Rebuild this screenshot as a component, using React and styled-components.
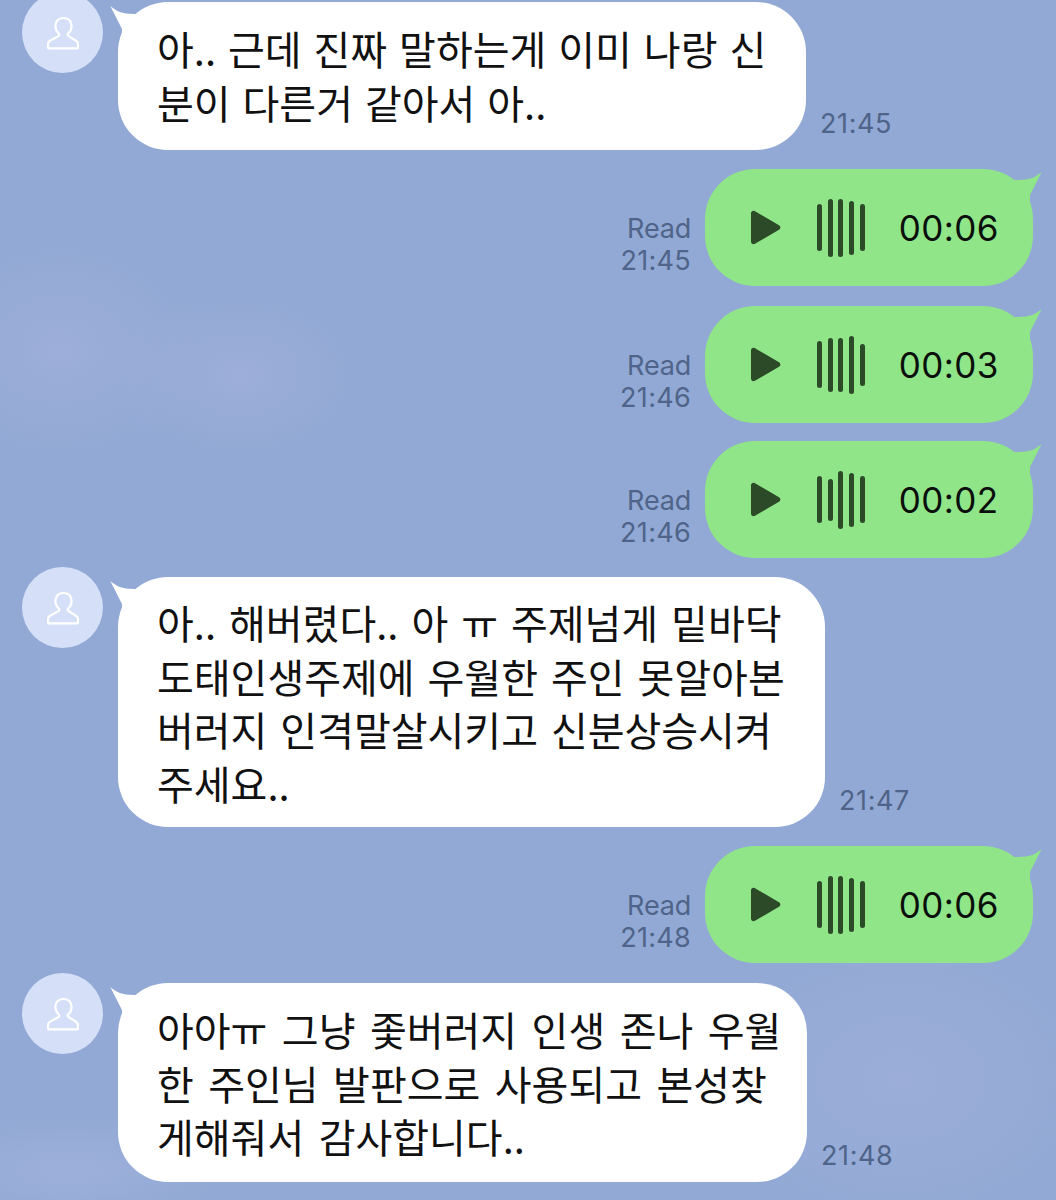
import React from 'react'
import styled, { createGlobalStyle } from 'styled-components'

const Global = createGlobalStyle`
  html, body {
    margin: 0;
    padding: 0;
    background: #92a9d5;
  }
`

const Page = styled.div`
  width: 1056px;
  height: 1200px;
  overflow: hidden;
  font-family: "Noto Sans CJK KR", "Liberation Sans", sans-serif;
  background-color: #92a9d5;
  background-image:
    radial-gradient(ellipse 150px 120px at 60px 350px, rgba(157, 174, 217, 0.9), transparent),
    radial-gradient(ellipse 130px 90px at 240px 375px, rgba(157, 174, 217, 0.9), transparent),
    radial-gradient(ellipse 170px 60px at 70px 1170px, rgba(160, 178, 220, 0.7), transparent),
    radial-gradient(ellipse 220px 160px at 900px 1080px, rgba(157, 174, 217, 0.8), transparent);
`

const Feed = styled.div`
  display: flex;
  flex-direction: column;
  margin-top: -8px;
`

const IncomingRow = styled.div`
  display: flex;
  align-items: flex-end;
  padding-left: 22px;
  margin-top: ${p => p.$top}px;
  position: relative;
`

const Avatar = styled.div`
  width: 81px;
  height: 81px;
  border-radius: 50%;
  background: #d5e0f8;
  display: flex;
  align-items: center;
  justify-content: center;
  align-self: flex-start;
  flex-shrink: 0;
`

const TextBubble = styled.div`
  position: relative;
  width: ${p => p.$width}px;
  height: ${p => p.$height}px;
  box-sizing: border-box;
  margin: 10px 0 0 15px;
  padding: ${p => p.$padTop}px 0 0 39px;
  background: #fff;
  border-radius: 50px;
  color: #111;
  font-size: 40px;
  line-height: 53.5px;
  word-spacing: ${p => p.$wordGap}px;
  white-space: nowrap;
`

const Tail = styled.svg`
  position: absolute;
  top: ${p => p.$top}px;
  ${p => (p.$side === 'right' ? 'right: -9px;' : 'left: -8px;')}
`

const Stamp = styled.div`
  font-family: "Inter", "Liberation Sans", sans-serif;
  font-size: 27px;
  color: #4f6488;
  line-height: 32px;
  letter-spacing: 0.3px;
  text-align: right;
`

const IncomingTime = styled(Stamp)`
  margin: 0 0 10px 14px;
  letter-spacing: 0.6px;
`

const OutgoingRow = styled.div`
  display: flex;
  justify-content: flex-end;
  align-items: flex-end;
  gap: 14px;
  padding-right: 23px;
  margin-top: ${p => p.$top}px;
`

const ReadStamp = styled(Stamp)`
  margin-bottom: 9px;
`

const ReadWord = styled.div`
  letter-spacing: -0.2px;
`

const VoiceBubble = styled.div`
  position: relative;
  width: 328px;
  height: 117px;
  box-sizing: border-box;
  padding-left: 45px;
  display: flex;
  align-items: center;
  background: #8fe588;
  border-radius: 50px;
`

const Waves = styled.div`
  display: flex;
  align-items: center;
  gap: 5.7px;
  margin-left: 36px;
`

const WaveBar = styled.span`
  display: block;
  width: 5px;
  height: ${p => p.$h}px;
  border-radius: 3px;
  background: #2c4a28;
`

const Duration = styled.div`
  font-family: "Inter", "Liberation Sans", sans-serif;
  font-size: 35px;
  color: #0b0f0b;
  margin-left: 34px;
  letter-spacing: 0.4px;
`

const PersonIcon = () => (
  <svg width="32" height="34" viewBox="0 0 32 34" fill="none" stroke="#fff" strokeWidth="2.2" strokeLinejoin="round">
    <path d="M16 2c-4.6 0-7.6 3.5-7.6 8 0 3.2 1.5 5.8 3.4 7.5 0.8 0.8 0.6 2-0.4 2.6L3 24.8c-1.4 0.8-2 2-2 3.4v3.4c0 0.5 0.3 0.8 0.8 0.8h28.4c0.5 0 0.8-0.3 0.8-0.8v-3.4c0-1.4-0.6-2.6-2-3.4l-7.4-4.7c-1-0.6-1.2-1.8-0.4-2.6 1.9-1.7 3.4-4.3 3.4-7.5 0-4.5-3-8-7.6-8z" />
  </svg>
)

const PlayIcon = () => (
  <svg width="31" height="35" viewBox="0 0 31 35">
    <path d="M1 3.5C1 1.2 3.1 0.2 5 1.3L29 15.2c1.8 1 1.8 3.6 0 4.6L5 33.7C3.1 34.8 1 33.8 1 31.5z" fill="#2c4a28" />
  </svg>
)

const LeftTail = () => (
  <Tail $side="left" $top={4} width="32" height="30" viewBox="0 0 32 30">
    <path d="M0.300 0C6 5 12 8 24 8H32V30H12V23z" fill="#fff" />
  </Tail>
)

const RightTail = () => (
  <Tail $side="right" $top={3} width="34" height="30" viewBox="0 0 34 30">
    <path d="M33.700 0C28 5 22 8 10 8H0V30H22V23z" fill="#8fe588" />
  </Tail>
)

const Incoming = ({ lines, width, height, padTop, time, top, wordGap }) => (
  <IncomingRow $top={top}>
    <Avatar><PersonIcon /></Avatar>
    <TextBubble $width={width} $height={height} $padTop={padTop} $wordGap={wordGap}>
      <LeftTail />
      {lines.map(line => <div key={line}>{line}</div>)}
    </TextBubble>
    <IncomingTime>{time}</IncomingTime>
  </IncomingRow>
)

const Outgoing = ({ time, duration, bars, top }) => (
  <OutgoingRow $top={top}>
    <ReadStamp>
      <ReadWord>Read</ReadWord>
      {time}
    </ReadStamp>
    <VoiceBubble>
      <RightTail />
      <PlayIcon />
      <Waves>
        {bars.map((h, i) => <WaveBar key={i} $h={h} />)}
      </Waves>
      <Duration>{duration}</Duration>
    </VoiceBubble>
  </OutgoingRow>
)

export default function App() {
  return (
    <Page>
      <Global />
      <Feed>
        <Incoming
          top={0}
          width={688}
          height={148}
          padTop={20}
          wordGap={3}
          time="21:45"
          lines={['아.. 근데 진짜 말하는게 이미 나랑 신', '분이 다른거 같아서 아..']}
        />
        <Outgoing top={19} time="21:45" duration="00:06" bars={[47, 58, 58, 54, 47]} />
        <Outgoing top={20} time="21:46" duration="00:03" bars={[47, 54, 54, 58, 42]} />
        <Outgoing top={18} time="21:46" duration="00:02" bars={[47, 42, 58, 54, 47]} />
        <Incoming
          top={9}
          width={707}
          height={250}
          padTop={19}
          wordGap={4}
          time="21:47"
          lines={['아.. 해버렸다.. 아 ㅠ 주제넘게 밑바닥', '도태인생주제에 우월한 주인 못알아본', '버러지 인격말살시키고 신분상승시켜', '주세요..']}
        />
        <Outgoing top={19} time="21:48" duration="00:06" bars={[47, 58, 58, 54, 47]} />
        <Incoming
          top={10}
          width={689}
          height={199}
          padTop={20}
          wordGap={5.5}
          time="21:48"
          lines={['아아ㅠ 그냥 좇버러지 인생 존나 우월', '한 주인님 발판으로 사용되고 본성찾', '게해줘서 감사합니다..']}
        />
      </Feed>
    </Page>
  )
}
